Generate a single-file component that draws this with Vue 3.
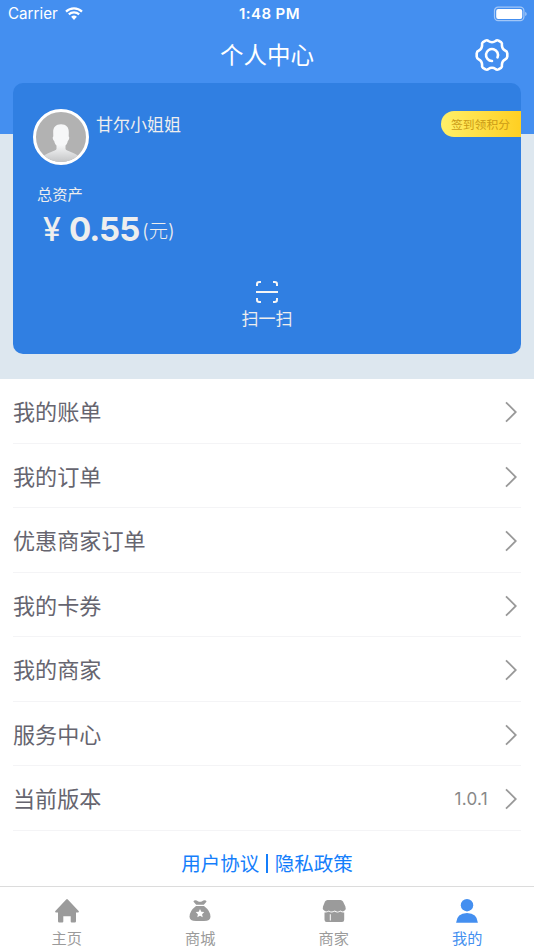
<template>
  <div class="page">
    <div class="top">
      <!-- 状态栏 -->
      <div class="status-bar">
        <div class="status-left">
          <span class="carrier">Carrier</span>
          <svg class="wifi" viewBox="0 0 18 13" width="18" height="13">
            <path d="M1 4.6a11.6 11.6 0 0 1 16 0" />
            <path d="M3.8 7.4a7.6 7.6 0 0 1 10.4 0" />
            <path class="dot" d="M6.1 9.8a4.3 4.3 0 0 1 5.8 0L9 12.9z" />
          </svg>
        </div>
        <span class="time">1:48 PM</span>
        <div class="status-right">
          <svg viewBox="0 0 34 16" width="34" height="16">
            <rect class="shell" x="1.5" y="1.2" width="29.4" height="13.4" rx="3.6" />
            <rect x="3.2" y="2.9" width="26" height="10" rx="2" fill="#fff" />
            <path d="M32.2 5.7v4.4q1.5-.7 1.5-2.2t-1.5-2.2z" fill="#fff" opacity=".5" />
          </svg>
        </div>
      </div>

      <!-- 标题栏 -->
      <div class="nav-bar">
        <span class="nav-title">个人中心</span>
        <svg class="setting" viewBox="0 0 34 34" width="34" height="34">
          <path
            d="M10.5 2.6Q12.2 1.8 13.4 3 17 5.400 20.600 3 21.800 1.800 23.500 2.600L26 4.100Q27.400 5.200 26.900 7 26.900 11.200 30.500 12.800 32 13.400 32.300 15.500V18.500Q32 20.600 30.500 21.200 26.900 22.800 26.900 27 27.400 28.800 26 29.900L23.500 31.400Q21.800 32.200 20.600 31 17 28.600 13.400 31 12.200 32.200 10.500 31.400L8 29.900Q6.600 28.800 7.100 27 7.100 22.800 3.500 21.200 2 20.600 1.700 18.500V15.500Q2 13.400 3.500 12.800 7.100 11.200 7.100 7 6.600 5.200 8 4.100Z"
          />
          <path d="M17 23A6 6 0 1 1 22.500 19.400" />
        </svg>
      </div>

      <!-- 资产卡片 -->
      <div class="card">
        <div class="user">
          <div class="avatar">
            <svg viewBox="0 0 50 50" width="50" height="50">
              <defs>
                <linearGradient id="body" x1="0" y1="0" x2="0" y2="1">
                  <stop offset="0.55" stop-color="#f6f7f8" />
                  <stop offset="1" stop-color="#c4c5c6" />
                </linearGradient>
              </defs>
              <path
                d="M25 12.200c5.200 0 8 3 7.800 8.200l-.1 4.200c1 .4.6 3.500-.9 4.300-.4 2.200-1.300 3.600-2.300 4.700v3.200c0 2.800 11 3.200 14.500 9.400V50H6v-3.800c3.500-6.200 14.500-6.600 14.500-9.400v-3.200c-1-1.100-1.900-2.500-2.300-4.700-1.500-.8-1.900-3.900-.9-4.300l-.1-4.200c-.2-5.200 2.600-8.200 7.800-8.200z"
                fill="url(#body)"
              />
            </svg>
          </div>
          <span class="user-name">甘尔小姐姐</span>
          <div class="sign">签到领积分</div>
        </div>
        <div class="asset-label">总资产</div>
        <div class="asset">
          <span class="symbol">¥</span>
          <span class="amount">0.55</span>
          <span class="unit">(元)</span>
        </div>
        <div class="scan">
          <svg viewBox="0 0 24 24" width="24" height="24">
            <path d="M2 6V4.200Q2 2 4.200 2H6M18 2h1.800Q22 2 22 4.200V6M22 18v1.800q0 2.200-2.200 2.200H18M6 22H4.200Q2 22 2 19.800V18M1 12h22" />
          </svg>
          <span>扫一扫</span>
        </div>
      </div>
    </div>

    <!-- 菜单列表 -->
    <div class="menu">
      <div v-for="item in menus" :key="item.title" class="menu-item">
        <span class="menu-title">{{ item.title }}</span>
        <span v-if="item.value" class="menu-value">{{ item.value }}</span>
        <svg class="arrow" viewBox="0 0 12 22" width="12" height="22">
          <path d="M1 1.400 10.800 11 1 20.600" />
        </svg>
      </div>
    </div>

    <div class="agreement">
      <a>用户协议</a>
      <i class="bar"></i>
      <a>隐私政策</a>
    </div>

    <!-- 底部导航 -->
    <div class="tab-bar">
      <div
        v-for="tab in tabs"
        :key="tab.name"
        class="tab"
        :class="{ active: tab.name === current }"
        @click="current = tab.name"
      >
        <svg viewBox="0 0 26 26" width="26" height="26">
          <template v-if="tab.icon === 'home'">
            <path d="M12.200 1.500q.8-.8 1.600 0L24.400 12.800q1.300 1.600-.5 1.800H22v8.600q0 1.300-1.300 1.300h-3q-1 0-1-1v-5.200H9.300v5.200q0 1-1 1h-3Q4 24.500 4 23.200v-8.600H2.100q-1.800-.2-.5-1.800z" />
          </template>
          <template v-else-if="tab.icon === 'mall'">
            <path d="M7.200 2.500q2-.6 3.700.7 2.100 1.300 4.200 0 1.700-1.300 3.700-.7 1.300.5.4 1.500L16.800 6.800H9.200L6.800 4q-.9-1 .4-1.500z" />
            <path d="M9 8.100h8q6.500 5 6.500 10.700 0 4.200-6.500 4.200H9q-6.500 0-6.500-4.200Q2.500 13.100 9 8.100z" />
            <path fill="#fff" d="m13 10.900 1.300 2.800 3 .4-2.200 2.100.6 3-2.700-1.500-2.700 1.500.6-3-2.200-2.100 3-.4z" />
          </template>
          <template v-else-if="tab.icon === 'shop'">
            <path d="M6.500 1.900h13q1.600 0 2.500 1.500l2.400 5.100q.8 2.300-.4 3.800-2 2.200-4.400.2-3 2.300-5.900 0-3 2.200-5.900-.1-2.800 2.200-5.200-.3-1.300-1.300-.6-3.600L4 3.400q.9-1.500 2.500-1.500z" />
            <path d="M3.500 14.500q2.300.4 4.100-.9 3 1.900 5.900 0 3 1.900 5.900 0 1.400 1.200 3.800.9v7.200q0 2.200-2.200 2.200H5.700q-2.200 0-2.200-2.200z" />
            <path fill="#fff" d="M8.800 16.200h1v6.400h-1z" />
          </template>
          <template v-else>
            <circle cx="13" cy="7.200" r="6.200" />
            <path d="M2.100 24.700q.8-9.600 10.900-9.700 10.100.1 10.900 9.700z" />
          </template>
        </svg>
        <span>{{ tab.name }}</span>
      </div>
    </div>
  </div>
</template>

<script setup>
import { ref } from "vue";

// 菜单数据
const menus = [
  { title: "我的账单" },
  { title: "我的订单" },
  { title: "优惠商家订单" },
  { title: "我的卡券" },
  { title: "我的商家" },
  { title: "服务中心" },
  { title: "当前版本", value: "1.0.1" }
];

// 底部导航数据
const tabs = [
  { name: "主页", icon: "home" },
  { name: "商城", icon: "mall" },
  { name: "商家", icon: "shop" },
  { name: "我的", icon: "mine" }
];

const current = ref("我的");
</script>

<style>
body {
  margin: 0;
  background-color: #fff;
}
</style>

<style scoped>
.page {
  width: 534px;
  height: 950px;
  display: flex;
  flex-direction: column;
  overflow: hidden;
  background-color: #fff;
  font-family: Inter, "Noto Sans CJK SC", sans-serif;
}

/* 顶部区域 */
.top {
  height: 379.4px;
  flex-shrink: 0;
  background: linear-gradient(#448ff0 134.5px, #dde7ef 134.5px);
}

.status-bar {
  height: 27px;
  padding: 0 7px 0 8px;
  display: grid;
  grid-template-columns: 1fr auto 1fr;
  align-items: center;
  color: #fff;
  font-size: 15px;
  line-height: 27px;
}

.status-left {
  display: flex;
  align-items: center;
  gap: 7px;
}

.carrier {
  font-size: 15.2px;
}

.wifi {
  fill: none;
  stroke: #fff;
  stroke-width: 2.2;
}

.wifi .dot {
  fill: #fff;
  stroke: none;
}

.time {
  padding-left: 4px;
  font-weight: 600;
  letter-spacing: 0.4px;
}

.status-right {
  display: flex;
  justify-content: flex-end;
}

.shell {
  fill: none;
  stroke: rgba(255, 255, 255, 0.5);
  stroke-width: 1.2;
}

.nav-bar {
  height: 56px;
  padding: 0 25px;
  display: grid;
  grid-template-columns: 1fr auto 1fr;
  align-items: center;
}

.nav-title {
  grid-column: 2;
  padding-top: 1px;
  color: #fff;
  font-size: 23.5px;
  line-height: 55px;
}

.setting {
  justify-self: end;
  fill: none;
  stroke: #fff;
  stroke-width: 2.6;
  stroke-linecap: round;
  stroke-linejoin: round;
}

/* 资产卡片 */
.card {
  height: 270.5px;
  margin: 0 13px;
  padding: 26px 0 0 20px;
  box-sizing: border-box;
  border-radius: 10px;
  background-color: #307fe2;
  color: #eee;
}

.user {
  height: 56px;
  display: flex;
  align-items: flex-start;
}

.avatar {
  width: 56px;
  height: 56px;
  box-sizing: border-box;
  border: 3px solid #fff;
  border-radius: 50%;
  background-color: #b2b2b2;
  overflow: hidden;
}

.user-name {
  margin-left: 7px;
  font-size: 17px;
  line-height: 32px;
}

.sign {
  width: 80px;
  height: 26px;
  margin: 2px 0 0 auto;
  padding-right: 1px;
  box-sizing: border-box;
  border-radius: 13px 0 0 13px;
  background: linear-gradient(90deg, #fff069, #ffcf22);
  color: #cb9b16;
  font-size: 11.8px;
  line-height: 28px;
  text-align: center;
}

.asset-label {
  margin: 18px 0 0 4px;
  font-size: 15.3px;
  line-height: 24px;
}

.asset {
  height: 44px;
  margin-left: 10px;
  display: flex;
  align-items: center;
}

.symbol {
  width: 26px;
  font-size: 32px;
  font-weight: 500;
  line-height: 48px;
  padding-top: 1px;
}

.amount {
  width: 73px;
  font-size: 33px;
  font-weight: 700;
  letter-spacing: -1px;
  line-height: 46px;
}

.unit {
  padding-top: 3px;
  font-size: 19.3px;
  font-weight: 300;
  line-height: 46px;
}

.scan {
  margin: 29px 20px 0 0;
  display: flex;
  flex-direction: column;
  align-items: center;
  font-size: 17px;
  line-height: 31px;
}

.scan svg {
  fill: none;
  stroke: #f5f5f5;
  stroke-width: 2;
}

/* 菜单列表 */
.menu {
  padding: 0 13px;
}

.menu-item {
  height: 64.5px;
  box-sizing: border-box;
  padding: 2px 4px 0 0;
  display: flex;
  align-items: center;
  border-bottom: 1px solid #f4f4f6;
}

.menu-title {
  flex: 1;
  color: #66656f;
  font-size: 22.1px;
  line-height: 32px;
}

.menu-value {
  margin-right: 17px;
  color: #888;
  font-size: 17px;
  letter-spacing: 0.3px;
}

.arrow {
  fill: none;
  stroke: #999;
  stroke-width: 1.8;
}

/* 协议 */
.agreement {
  flex: 1;
  padding-top: 11px;
  box-sizing: border-box;
  display: flex;
  justify-content: center;
  align-items: center;
  gap: 7px;
  color: #147efb;
  font-size: 19.5px;
  line-height: 30px;
}

.bar {
  width: 1.5px;
  height: 19px;
  background-color: #147efb;
}

/* 底部导航 */
.tab-bar {
  height: 64px;
  flex-shrink: 0;
  box-sizing: border-box;
  padding-top: 11px;
  display: flex;
  border-top: 1px solid #dcdcdc;
}

.tab {
  flex: 1;
  display: flex;
  flex-direction: column;
  align-items: center;
  color: #9b9b9b;
  font-size: 15.2px;
  line-height: 30px;
  cursor: pointer;
}

.tab svg {
  flex-shrink: 0;
  fill: currentColor;
}

.tab.active {
  color: #448ff0;
}
</style>
